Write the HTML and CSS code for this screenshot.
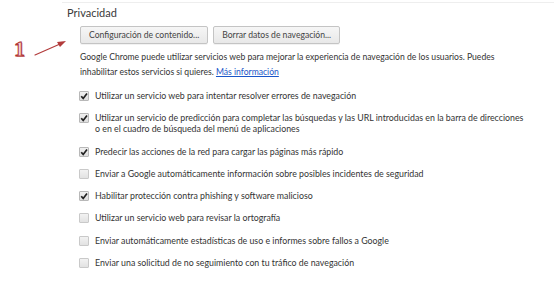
FILE: index.html
```html
<!DOCTYPE html>
<html lang="es">
<head>
<meta charset="utf-8">
<title>Privacidad</title>
<link rel="stylesheet" href="styles.css">
</head>
<body>
<div class="page">
  <div class="annot">
    <span class="annot-num">1</span>
    <svg class="annot-arrow" width="40" height="24" viewBox="0 0 40 24">
      <line x1="2" y1="19" x2="27" y2="8" stroke="#b23b3b" stroke-width="1.2" stroke-linecap="round"/>
      <polygon points="33,5 24,6 27,11" fill="#b23b3b"/>
    </svg>
  </div>
  <section class="section">
    <h3 class="section-title">Privacidad</h3>
    <div class="section-body">
      <div class="buttons">
        <button class="btn">Configuración de contenido...</button>
        <button class="btn">Borrar datos de navegación...</button>
      </div>
      <p class="desc">Google Chrome puede utilizar servicios web para mejorar la experiencia de navegación de los usuarios. Puedes inhabilitar estos servicios si quieres. <a class="link" href="#">Más información</a></p>
      <ul class="checks">
        <li class="check-item"><span class="box checked"><svg viewBox="0 0 10 10" width="10" height="10"><path d="M2.2 5.2 L4.2 7.4 L8 2.4" fill="none" stroke="#222" stroke-width="1.7"/></svg></span><span class="label">Utilizar un servicio web para intentar resolver errores de navegación</span></li>
        <li class="check-item"><span class="box checked"><svg viewBox="0 0 10 10" width="10" height="10"><path d="M2.2 5.2 L4.2 7.4 L8 2.4" fill="none" stroke="#222" stroke-width="1.7"/></svg></span><span class="label">Utilizar un servicio de predicción para completar las búsquedas y las URL introducidas en la barra de direcciones o en el cuadro de búsqueda del menú de aplicaciones</span></li>
        <li class="check-item"><span class="box checked"><svg viewBox="0 0 10 10" width="10" height="10"><path d="M2.2 5.2 L4.2 7.4 L8 2.4" fill="none" stroke="#222" stroke-width="1.7"/></svg></span><span class="label">Predecir las acciones de la red para cargar las páginas más rápido</span></li>
        <li class="check-item"><span class="box"></span><span class="label">Enviar a Google automáticamente información sobre posibles incidentes de seguridad</span></li>
        <li class="check-item"><span class="box checked"><svg viewBox="0 0 10 10" width="10" height="10"><path d="M2.2 5.2 L4.2 7.4 L8 2.4" fill="none" stroke="#222" stroke-width="1.7"/></svg></span><span class="label">Habilitar protección contra phishing y software malicioso</span></li>
        <li class="check-item"><span class="box"></span><span class="label">Utilizar un servicio web para revisar la ortografía</span></li>
        <li class="check-item"><span class="box"></span><span class="label">Enviar automáticamente estadísticas de uso e informes sobre fallos a Google</span></li>
        <li class="check-item"><span class="box"></span><span class="label">Enviar una solicitud de no seguimiento con tu tráfico de navegación</span></li>
      </ul>
    </div>
  </section>
</div>
</body>
</html>
```

FILE: styles.css
```css
html, body {
  margin: 0;
  padding: 0;
  background: #ffffff;
}

body {
  font-family: Lato, "Open Sans", sans-serif;
  color: #333333;
}

.page {
  position: relative;
  width: 554px;
  height: 289px;
  overflow: hidden;
  padding-top: 2px;
  box-sizing: border-box;
}

.annot {
  position: absolute;
  left: 13px;
  top: 36px;
  width: 60px;
  height: 30px;
}

.annot-num {
  position: absolute;
  left: 1px;
  top: 2px;
  font-family: "Liberation Serif", serif;
  font-weight: bold;
  font-size: 22px;
  line-height: 22px;
  color: #f6d6d6;
  -webkit-text-stroke: 1px #b03232;
  text-shadow: 1px 1px 0 #d9a0a0;
}

.annot-arrow {
  position: absolute;
  left: 20px;
  top: 0px;
}

.section {
  margin-left: 62px;
  border-top: 1px solid #eeeeee;
  padding-left: 5px;
}

.section-title {
  margin: 3px 0 0 0;
  font-size: 11px;
  line-height: 14px;
  font-weight: normal;
  color: #3a3a3a;
}

.section-body {
  padding-left: 13px;
}

.buttons {
  display: flex;
  gap: 5px;
  margin-top: 6px;
}

.btn {
  height: 18px;
  padding: 0 8px;
  font-family: Lato, "Open Sans", sans-serif;
  font-size: 8.6px;
  color: #444444;
  background: linear-gradient(#f6f6f6, #e8e8e8);
  border: 1px solid #c4c4c4;
  border-radius: 2px;
  box-shadow: 0 1px 0 rgba(0,0,0,0.05);
}

.desc {
  margin: 6px 0 0 0;
  font-size: 8.6px;
  line-height: 15px;
  width: 430px;
}

.link {
  color: #1a55c8;
  text-decoration: underline;
}

.checks {
  list-style: none;
  margin: 10px 0 0 -1px;
  padding: 0;
  display: flex;
  flex-direction: column;
  gap: 11.3px;
}

.check-item {
  display: flex;
  align-items: flex-start;
  gap: 6px;
  font-size: 8.8px;
  line-height: 11px;
}

.label {
  width: 433px;
}

.box {
  flex: none;
  width: 8px;
  height: 8px;
  margin-top: 1px;
  border: 1px solid #c9c9c9;
  border-radius: 1px;
  background: linear-gradient(#f2f2f2, #e2e2e2);
  position: relative;
}

.box svg {
  position: absolute;
  left: -1px;
  top: -1px;
}

.box.checked {
  border-color: #b8b8b8;
  background: linear-gradient(#f0f0f0, #dedede);
}
```
